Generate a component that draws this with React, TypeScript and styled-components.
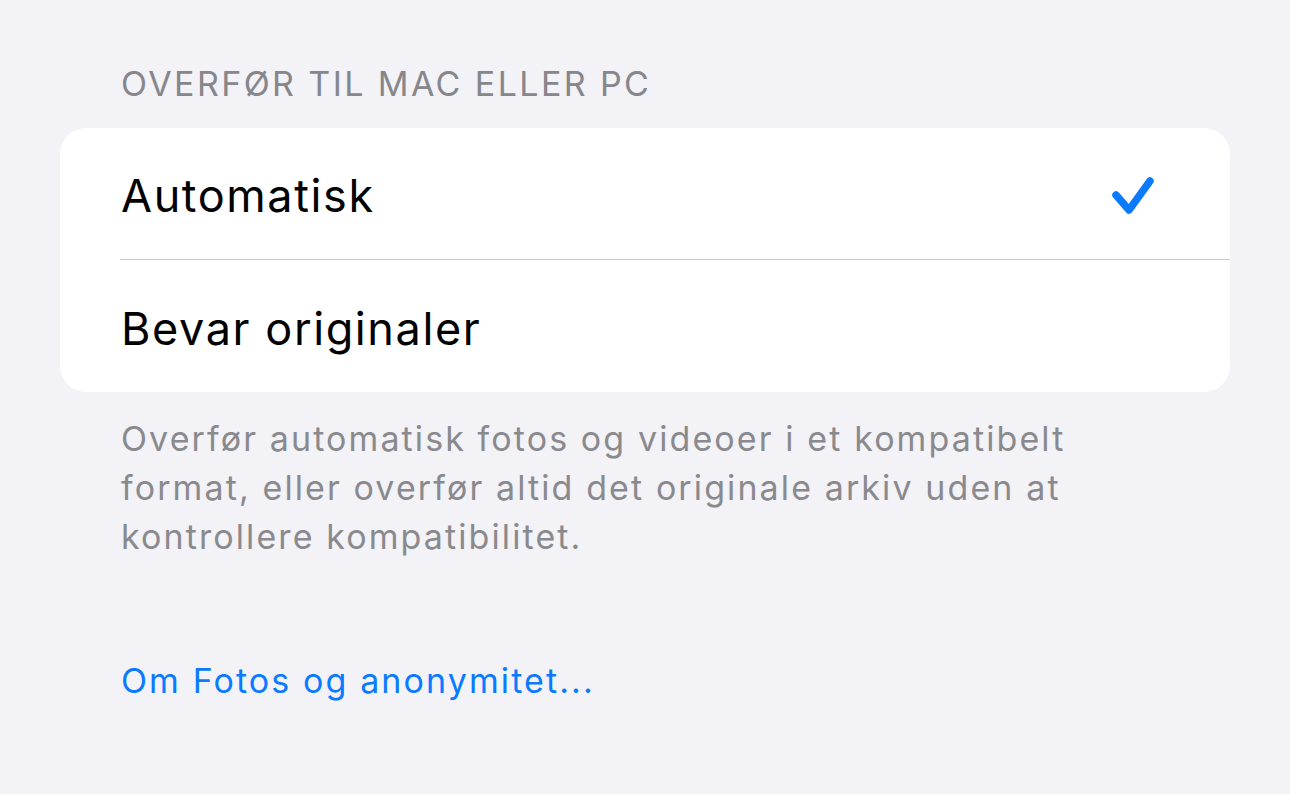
import React from "react";
import styled, { createGlobalStyle } from "styled-components";

const Global = createGlobalStyle`
  html, body { margin: 0; padding: 0; background: #f2f2f7; }
  body { font-family: Inter, "Noto Sans", sans-serif; -webkit-font-smoothing: antialiased; }
`;

const Page = styled.div`
  width: 1290px;
  height: 794px;
  background: #f2f2f7;
  padding: 62px 60px 0 60px;
  box-sizing: border-box;
  display: flex;
  flex-direction: column;
`;

const SectionHeader = styled.div`
  padding-left: 61px;
  font-size: 34px;
  line-height: 44px;
  color: #86868b;
  letter-spacing: 2.4px;
  text-transform: uppercase;
  margin-bottom: 22px;
`;

const Card = styled.div`
  background: #ffffff;
  border-radius: 26px;
  overflow: hidden;
  display: flex;
  flex-direction: column;
`;

const Row = styled.div<{ $divider?: boolean }>`
  height: 132px;
  margin-left: 60px;
  padding-right: 72px;
  padding-top: 4px;
  display: flex;
  align-items: center;
  justify-content: space-between;
  box-sizing: border-box;
  border-bottom: ${(p) => (p.$divider ? "1px solid #c8c8cc" : "none")};
`;

const RowLabel = styled.span`
  font-size: 45px;
  color: #000;
  letter-spacing: 1.6px;
  padding-left: 1px;
`;

const Footer = styled.p`
  margin: 22px 0 0 0;
  padding-left: 61px;
  font-size: 34px;
  line-height: 49px;
  color: #8a8a8e;
  letter-spacing: 2.1px;
  white-space: nowrap;
`;

const Link = styled.a`
  margin-top: 98px;
  padding-left: 61px;
  font-size: 34px;
  line-height: 44px;
  color: #0a7aff;
  letter-spacing: 2.1px;
  text-decoration: none;
`;

const CheckIcon = styled.svg`
  display: block;
  margin-top: -2px;
`;

const Check = () => (
  <CheckIcon width="50" height="46" viewBox="0 0 50 46">
    <polyline
      points="8,23 21,38 42,9"
      fill="none"
      stroke="#0a7aff"
      strokeWidth="7.5"
      strokeLinecap="round"
      strokeLinejoin="round"
    />
  </CheckIcon>
);

export default function App() {
  return (
    <>
      <Global />
      <Page>
        <SectionHeader>Overfør til Mac eller PC</SectionHeader>
        <Card>
          <Row $divider>
            <RowLabel>Automatisk</RowLabel>
            <Check />
          </Row>
          <Row>
            <RowLabel>Bevar originaler</RowLabel>
          </Row>
        </Card>
        <Footer>
          Overfør automatisk fotos og videoer i et kompatibelt
          <br />
          format, eller overfør altid det originale arkiv uden at
          <br />
          kontrollere kompatibilitet.
        </Footer>
        <Link>Om Fotos og anonymitet...</Link>
      </Page>
    </>
  );
}
